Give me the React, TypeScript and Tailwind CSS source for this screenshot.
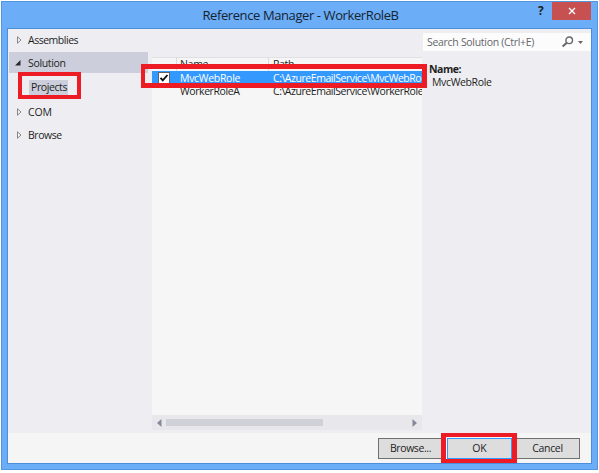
import type { ReactNode } from "react";

const Collapsed = () => (
  <svg width="5" height="8" viewBox="0 0 5 8" className="ml-[8px] shrink-0">
    <path d="M0.5 0.8V7.2L4 4Z" fill="#f8f8f9" stroke="#77777b" strokeWidth="0.9" />
  </svg>
);

const Expanded = () => (
  <svg width="6" height="6" viewBox="0 0 6 6" className="ml-[6px] mr-px shrink-0">
    <path d="M5.5 0V5.5H0Z" fill="#2a2a2e" />
  </svg>
);

function TreeItem({ label, open, tracking }: { label: string; open?: boolean; tracking: string }) {
  return (
    <div className={`flex h-[21px] w-[139px] items-center ${open ? "bg-[#cccedb]" : ""}`}>
      {open ? <Expanded /> : <Collapsed />}
      <span className={`ml-[6px] ${tracking}`}>{label}</span>
    </div>
  );
}

function Button({ children, className }: { children: ReactNode; className: string }) {
  return (
    <button className={`flex h-[21px] items-center justify-center border bg-[#dddddd] pb-px ${className}`}>
      {children}
    </button>
  );
}

export default function App() {
  return (
    <div className="relative h-[473px] w-[599px] overflow-hidden whitespace-nowrap bg-white pl-px pt-px font-['Open_Sans','Noto_Sans',sans-serif] text-[10.5px] leading-[14px] text-[#1e1e1e]">
      <div className="flex h-[469px] w-[597px] flex-col border border-[#5495df] bg-[#6badf6] px-[5px] pb-[5px]">
        <header className="relative flex h-[26px] shrink-0 justify-center">
          <h1 className="ml-[2px] mt-[4px] text-[13px] leading-[18px] tracking-[-0.4px] text-[#162331]">Reference Manager - WorkerRoleB</h1>
          <span className="absolute left-[531px] top-[2px] text-[12px] font-bold">?</span>
          <button className="absolute left-[545px] top-0 flex h-[18px] w-[39px] items-center justify-center bg-[#c75050]">
            <svg width="8" height="8" viewBox="0 0 8 8"><path d="M1 1L7 7M7 1L1 7" stroke="#fff" strokeWidth="1.4" /></svg>
          </button>
        </header>
        <div className="flex min-h-0 flex-1 flex-col border border-[#4b8edb] bg-[#f5f5f5]">
          <main className="flex h-[404px] shrink-0 bg-[#eeeef2]">
            <nav className="flex w-[144px] shrink-0 flex-col pl-px">
              <TreeItem label="Assemblies" tracking="tracking-[-0.48px]" />
              <div className="pt-[2px]"><TreeItem label="Solution" open tracking="tracking-[-0.33px]" /></div>
              <div className="flex h-[28px] items-start pl-[20px] pt-[7px]">
                <span className="h-[15px] w-[39px] bg-[#cccedb] pl-[2px] leading-[14px] tracking-[-0.4px]">Projects</span>
              </div>
              <TreeItem label="COM" tracking="tracking-[-0.2px]" />
              <div className="pt-[2px]"><TreeItem label="Browse" tracking="tracking-[-0.45px]" /></div>
            </nav>
            <section className="mt-[28px] flex h-[373px] w-[270px] shrink-0 flex-col overflow-hidden border-t border-[#dfdfe4] bg-[#f6f6f6]">
              <div className="flex h-[13px] shrink-0 overflow-hidden leading-[13px]">
                <div className="w-[25px] shrink-0 border-r border-[#dadadd]" />
                <div className="w-[92px] shrink-0 border-r border-[#dadadd] pl-[3px] tracking-[-0.3px]">Name</div>
                <div className="pl-[4px] tracking-[-0.3px]">Path</div>
              </div>
              <div className="flex h-[14px] shrink-0 items-center bg-[#3399ff] text-white">
                <div className="flex w-[28px] shrink-0 justify-start pl-[6px]">
                  <svg width="12" height="12" viewBox="0 0 12 12">
                    <rect x="0.5" y="0.5" width="11" height="11" fill="#fff" stroke="#606060" />
                    <path d="M2.5 5.8L4.8 8.4L9.5 3" fill="none" stroke="#111" strokeWidth="1.9" />
                  </svg>
                </div>
                <div className="w-[93px] shrink-0 tracking-[-0.3px]">MvcWebRole</div>
                <div className="tracking-[-0.45px]">C:\AzureEmailService\MvcWebRole</div>
              </div>
              <div className="flex h-[12px] shrink-0 items-center pl-[28px]">
                <div className="w-[93px] shrink-0 tracking-[-0.42px]">WorkerRoleA</div>
                <div className="tracking-[-0.45px]">C:\AzureEmailService\WorkerRoleA</div>
              </div>
              <div className="flex-1" />
              <div className="flex h-[15px] shrink-0 items-center bg-[#e8e8ec] pl-[5px] pr-[5px]">
                <svg width="5" height="8" viewBox="0 0 5 8"><path d="M4.5 0V8L0 4Z" fill="#868999" /></svg>
                <div className="ml-[4px] h-[7px] w-[157px] bg-[#d0d1d7]" />
                <svg width="5" height="8" viewBox="0 0 5 8" className="ml-auto"><path d="M0.5 0V8L5 4Z" fill="#868999" /></svg>
              </div>
            </section>
            <aside className="min-w-0 flex-1 pt-[4px]">
              <div className="ml-px flex h-[18px] items-center bg-[#fcfcfc] pl-[4px] text-[#66666b]">
                <span className="tracking-[-0.3px]">Search Solution (Ctrl+E)</span>
                <svg width="13" height="12" viewBox="0 0 13 12" className="ml-auto">
                  <circle cx="8.2" cy="4.3" r="3.3" fill="none" stroke="#66666b" strokeWidth="1.4" />
                  <path d="M5.8 6.7L1.6 10.5" stroke="#66666b" strokeWidth="2.1" />
                </svg>
                <svg width="5" height="3" viewBox="0 0 5 3" className="ml-[4px] mr-[8px]"><path d="M0 0H5L2.5 3Z" fill="#66666b" /></svg>
              </div>
              <div className="mt-[12px] pl-[7px] leading-[13px]">
                <div className="font-bold tracking-[-0.45px]">Name:</div>
                <div className="pl-[3px] tracking-[-0.36px]">MvcWebRole</div>
              </div>
            </aside>
          </main>
          <footer className="flex pl-[370px] pt-[5px]">
            <Button className="w-[65px] border-[#707070] tracking-[-0.4px]">Browse...</Button>
            <Button className="ml-[4px] w-[65px] border-[#3399ff]">OK</Button>
            <Button className="ml-[3px] w-[65px] border-[#707070] tracking-[-0.35px]">Cancel</Button>
          </footer>
        </div>
      </div>
      <div className="absolute left-[18px] top-[72px] h-[27px] w-[63px] border-4 border-[#ed1c24]" />
      <div className="absolute left-[141px] top-[64px] h-[24px] w-[286px] border-[5px] border-l-4 border-[#ed1c24]" />
      <div className="absolute left-[441px] top-[433px] h-[30px] w-[76px] border-[5px] border-y-4 border-[#ed1c24]" />
    </div>
  );
}
